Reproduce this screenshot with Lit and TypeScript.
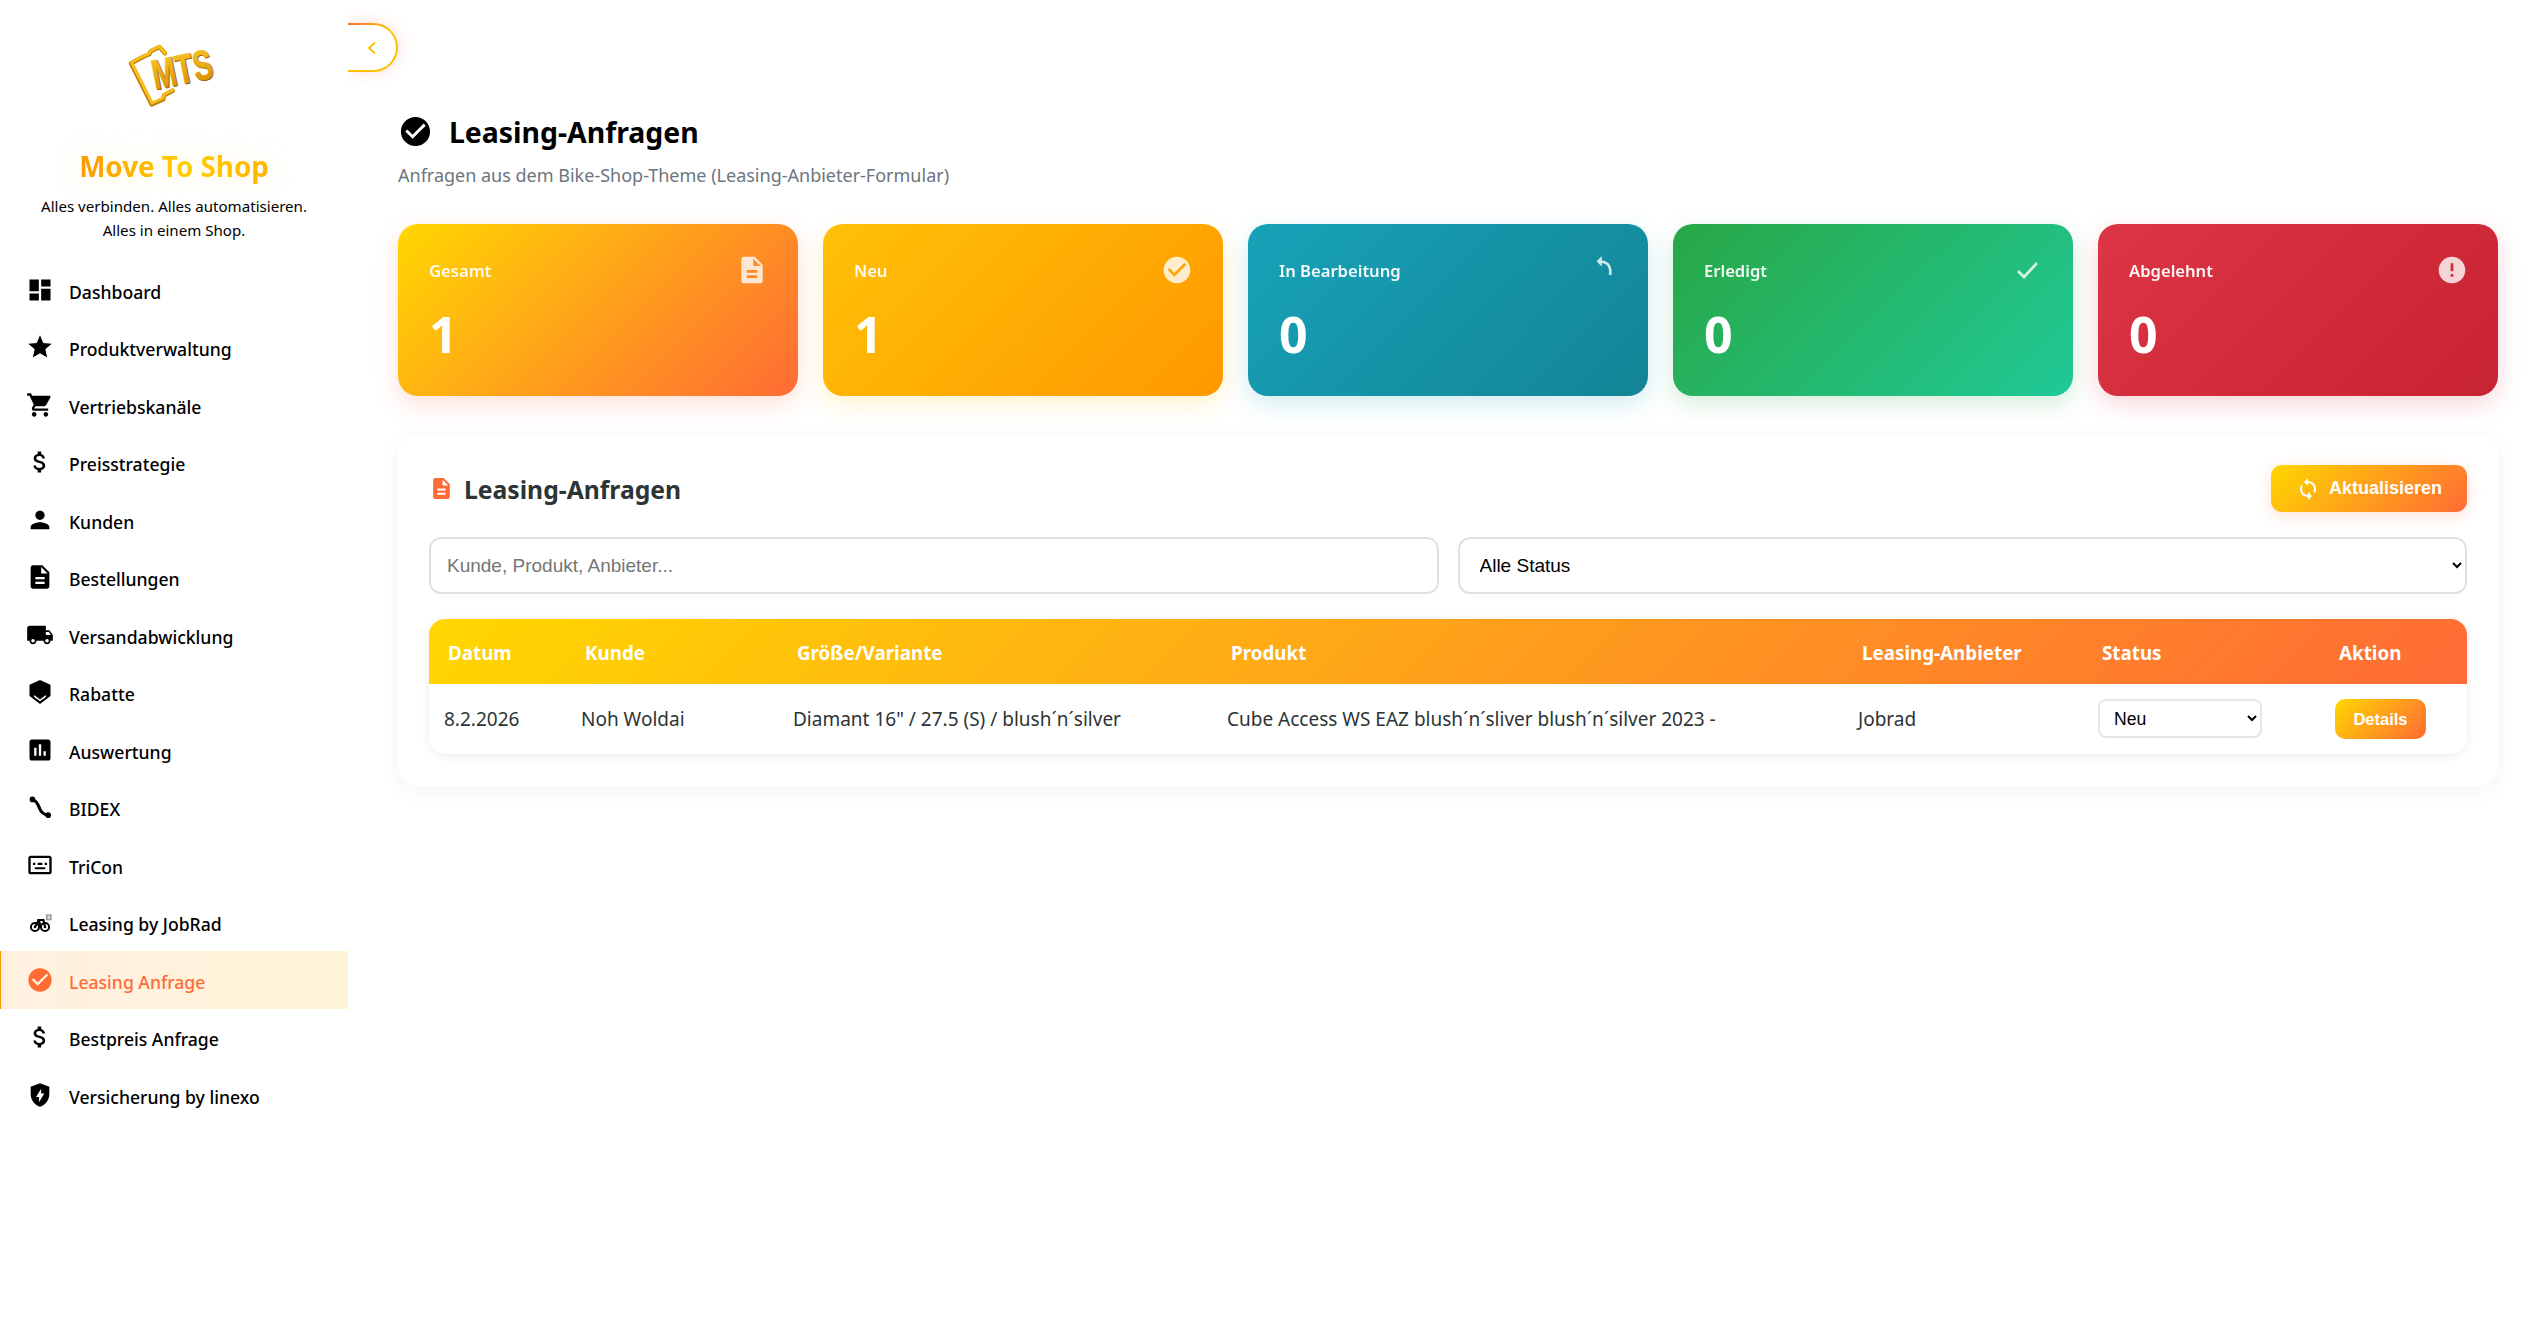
import { LitElement, html, svg, css } from 'lit';
import { customElement } from 'lit/decorators.js';

const p = (d: string) => svg`<path d=${d}></path>`;

const icons: Record<string, unknown> = {
  dashboard: p('M3 13h8V3H3v10zm0 8h8v-6H3v6zm10 0h8V11h-8v10zm0-18v6h8V3h-8z'),
  star: p('M12 17.27L18.18 21l-1.64-7.03L22 9.24l-7.19-.61L12 2 9.19 8.63 2 9.24l5.46 4.73L5.82 21z'),
  cart: p('M7 18c-1.1 0-1.99.9-1.99 2S5.9 22 7 22s2-.9 2-2-.9-2-2-2zM1 2v2h2l3.6 7.59-1.35 2.45c-.16.28-.25.61-.25.96 0 1.1.9 2 2 2h12v-2H7.42c-.14 0-.25-.11-.25-.25l.03-.12.9-1.63h7.45c.75 0 1.41-.41 1.75-1.03l3.58-6.49c.08-.14.12-.31.12-.48 0-.55-.45-1-1-1H5.21l-.94-2H1zm16 16c-1.1 0-1.99.9-1.99 2s.89 2 1.99 2 2-.9 2-2-.9-2-2-2z'),
  money: p('M11.8 10.9c-2.27-.59-3-1.2-3-2.15 0-1.09 1.01-1.85 2.7-1.85 1.78 0 2.44.85 2.5 2.1h2.21c-.07-1.72-1.12-3.3-3.21-3.81V3h-3v2.16c-1.94.42-3.5 1.68-3.5 3.61 0 2.31 1.91 3.46 4.7 4.13 2.5.6 3 1.48 3 2.41 0 .69-.49 1.79-2.7 1.79-2.06 0-2.87-.92-2.98-2.1h-2.2c.12 2.19 1.76 3.42 3.68 3.83V21h3v-2.15c1.95-.37 3.5-1.5 3.5-3.55 0-2.84-2.43-3.81-4.7-4.4z'),
  person: p('M12 12c2.21 0 4-1.79 4-4s-1.79-4-4-4-4 1.79-4 4 1.79 4 4 4zm0 2c-2.67 0-8 1.34-8 4v2h16v-2c0-2.66-5.33-4-8-4z'),
  doc: p('M14 2H6c-1.1 0-1.99.9-1.99 2L4 20c0 1.1.89 2 1.99 2H18c1.1 0 2-.9 2-2V8l-6-6zm2 16H8v-2h8v2zm0-4H8v-2h8v2zm-3-5V3.5L18.5 9H13z'),
  truck: p('M20 8h-3V4H3c-1.1 0-2 .9-2 2v11h2c0 1.66 1.34 3 3 3s3-1.34 3-3h6c0 1.66 1.34 3 3 3s3-1.34 3-3h2v-5l-3-4zM6 18.5c-.83 0-1.5-.67-1.5-1.5s.67-1.5 1.5-1.5 1.5.67 1.5 1.5-.67 1.5-1.5 1.5zm13.5-9l1.96 2.5H17V9.5h2.5zm-1.5 9c-.83 0-1.5-.67-1.5-1.5s.67-1.5 1.5-1.5 1.5.67 1.5 1.5-.67 1.5-1.5 1.5z'),
  tag: svg`<path fill-rule="evenodd" d="M12 1.7L21 5.8v9.7l-9 6.8-9-6.8V5.8zM7 14.6l5 3.8 5-3.8v1.7L12 20l-5-3.7z"></path>`,
  chart: p('M19 3H5c-1.1 0-2 .9-2 2v14c0 1.1.9 2 2 2h14c1.1 0 2-.9 2-2V5c0-1.1-.9-2-2-2zM9 17H7v-7h2v7zm4 0h-2V7h2v10zm4 0h-2v-4h2v4z'),
  link: svg`<circle cx="5.5" cy="5.5" r="2.4"></circle><circle cx="19" cy="19" r="2.4"></circle><path d="M5.5 5.5c4.5 1.5 5.5 6.5 6.5 8.5s3 4.5 7 5" fill="none" stroke="currentColor" stroke-width="2.6"></path>`,
  tricon: p('M20 4H4c-1.1 0-2 .9-2 2v12c0 1.1.9 2 2 2h16c1.1 0 2-.9 2-2V6c0-1.1-.9-2-2-2zm0 14H4V6h16v12zM6 10h2v2H6zm4 0h4v2h-4zm6 0h2v2h-2zM7.5 14h9v1.7h-9z'),
  bike: svg`<rect x="17.1" y="5.4" width="4.9" height="5.2" fill="#9a9a9a"></rect><rect x="18.5" y="6.6" width="2.1" height="2.8" fill="#dcdcdc"></rect>
    <g fill="none" stroke="currentColor"><circle cx="7.7" cy="16.3" r="3.5" stroke-width="1.7"></circle><circle cx="16.3" cy="16.3" r="3.5" stroke-width="1.7"></circle>
    <path d="M7.7 16.3l3.3-6h4l1.3 6M11 10.3l1.6 6M9.6 10.3H12" stroke-width="1.8"></path></g><circle cx="7.7" cy="16.3" r="1.1"></circle><circle cx="16.3" cy="16.3" r="1.1"></circle>`,
  check: p('M12 2C6.48 2 2 6.48 2 12s4.48 10 10 10 10-4.48 10-10S17.52 2 12 2zm-2 15l-5-5 1.41-1.41L10 14.17l7.59-7.59L19 8l-9 9z'),
  shield: svg`<path fill-rule="evenodd" d="M12 2L4 5v6.1c0 5 3.4 9.7 8 10.9 4.6-1.2 8-5.9 8-10.9V5zm1 4.6l-4.4 7.2h2.6v4.4l4.4-7.4H13z"></path>`,
  undo: svg`<path d="M8 5.4l3.8-3.9v8z"></path><path d="M10.5 5.5h.5c4.2.3 7 3 7.2 6.6v3.6" fill="none" stroke="currentColor" stroke-width="2"></path>`,
  done: svg`<path d="M5.25 12.75l4.5 4.5 9.75-10.5" fill="none" stroke="currentColor" stroke-width="2"></path>`,
  error: p('M12 2C6.48 2 2 6.48 2 12s4.48 10 10 10 10-4.48 10-10S17.52 2 12 2zm1 15h-2v-2h2v2zm0-4h-2V7h2v6z'),
  sync: p('M12 4V1L8 5l4 4V6c3.31 0 6 2.69 6 6 0 1.01-.25 1.97-.7 2.8l1.46 1.46C19.54 15.03 20 13.57 20 12c0-4.42-3.58-8-8-8zm0 14c-3.31 0-6-2.69-6-6 0-1.01.25-1.97.7-2.8L5.24 7.74C4.46 8.97 4 10.43 4 12c0 4.42 3.58 8 8 8v3l4-4-4-4v3z'),
};

const icon = (name: string) => html`<svg class="ico" viewBox="0 0 24 24" fill="currentColor">${icons[name]}</svg>`;

const nav = [
  ['dashboard', 'Dashboard'],
  ['star', 'Produktverwaltung'],
  ['cart', 'Vertriebskanäle'],
  ['money', 'Preisstrategie'],
  ['person', 'Kunden'],
  ['doc', 'Bestellungen'],
  ['truck', 'Versandabwicklung'],
  ['tag', 'Rabatte'],
  ['chart', 'Auswertung'],
  ['link', 'BIDEX'],
  ['tricon', 'TriCon'],
  ['bike', 'Leasing by JobRad'],
  ['check', 'Leasing Anfrage'],
  ['money', 'Bestpreis Anfrage'],
  ['shield', 'Versicherung by linexo'],
];

const stats = [
  ['c-total', 'Gesamt', '1', 'doc'],
  ['c-new', 'Neu', '1', 'check'],
  ['c-work', 'In Bearbeitung', '0', 'undo'],
  ['c-done', 'Erledigt', '0', 'done'],
  ['c-rej', 'Abgelehnt', '0', 'error'],
];

@customElement('app-root')
export class AppRoot extends LitElement {
  static styles = css`
    :host {
      display: block;
      min-height: 1329px;
      background: #fff;
      color: #000;
      font-family: "Noto Sans", "Open Sans", sans-serif;
      position: relative;
    }
    * { box-sizing: border-box; }
    .layout { display: flex; align-items: stretch; min-height: 1329px; }

    .sidebar {
      width: 348px;
      flex: none;
      background: #fff;
      position: relative;
      z-index: 2;
    }
    .brand-head {
      height: 261px;
      padding-top: 45px;
      text-align: center;
    }
    .logo { display: block; width: 88px; height: 62px; margin-left: 129px; overflow: visible; }
    .brand {
      margin-top: 39px;
      display: inline-block;
      font-size: 27.8px;
      line-height: 40px;
      font-weight: 700;
      background: linear-gradient(90deg, #ff9800 0%, #ffcf00 55%, #ffb300 100%);
      -webkit-background-clip: text;
      background-clip: text;
      color: transparent;
      filter: drop-shadow(0 0 14px rgba(255, 193, 7, 0.18));
    }
    .tagline { font-size: 15.1px; line-height: 24px; margin-top: 8px; }

    .item {
      height: 57.5px;
      display: flex;
      align-items: center;
      padding-left: 26px;
      font-size: 17.6px;
      font-weight: 500;
      border-left: 1px solid transparent;
    }
    .item .ico { width: 28px; height: 28px; margin-left: -1px; flex: none; }
    .item span { margin-left: 15px; margin-top: 4px; }
    .item.active {
      background: linear-gradient(90deg, #fff0e0, #fff4d9);
      border-left-color: #ff9800;
      color: #ff6b35;
    }

    .toggle {
      position: absolute;
      left: 348px;
      top: 23px;
      width: 50px;
      height: 49px;
      border: 2.5px solid transparent;
      border-left: 0;
      border-radius: 0 25px 25px 0;
      background: linear-gradient(#fff, #fff) padding-box,
        linear-gradient(135deg, #ff6b35 0%, #ffc107 45%, #ffc107 100%) border-box;
      box-shadow: 0 0 15px rgba(255, 107, 53, 0.22);
      color: #ffc107;
      display: flex;
      align-items: center;
      justify-content: center;
      padding: 0 2px 0 0;
      z-index: 1;
    }
    .toggle svg { width: 14px; height: 14px; margin-left: 2px; }

    .main { flex: 1; min-width: 0; padding: 112px 47px 0 50px; }
    .page-title {
      display: flex;
      align-items: center;
      height: 40px;
      font-size: 28.4px;
      font-weight: 700;
    }
    .page-title .ico { width: 35px; height: 35px; margin: -2px 16px 0 0; }
    .subtitle { margin-top: 10px; line-height: 26px; font-size: 18px; color: #6c757d; }

    .stats { display: grid; grid-template-columns: repeat(5, 400px); column-gap: 25px; margin-top: 36px; }
    .stat {
      height: 172px;
      border-radius: 20px;
      padding: 30px 30px 0 31px;
      color: #fff;
    }
    .stat-head { display: flex; align-items: center; justify-content: space-between; height: 32px; }
    .stat-label { font-size: 16.6px; font-weight: 600; opacity: 0.95; }
    .stat-head .ico { width: 32px; height: 32px; opacity: 0.8; }
    .stat-num { margin-top: 18px; font-size: 50px; line-height: 60px; font-weight: 700; }
    .c-total { background: linear-gradient(135deg, #ffd700, #ff6b35); box-shadow: 0 8px 25px rgba(255, 107, 53, 0.2); }
    .c-new { background: linear-gradient(135deg, #ffc107, #ff9800); box-shadow: 0 8px 25px rgba(255, 193, 7, 0.2); }
    .c-work { background: linear-gradient(135deg, #17a2b8, #138496); box-shadow: 0 8px 25px rgba(23, 162, 184, 0.2); }
    .c-done { background: linear-gradient(135deg, #28a745, #20c997); box-shadow: 0 8px 25px rgba(40, 167, 69, 0.2); }
    .c-rej { background: linear-gradient(135deg, #dc3545, #c82333); box-shadow: 0 8px 25px rgba(220, 53, 69, 0.2); }

    .panel {
      margin-top: 39px;
      height: 351px;
      border-radius: 20px;
      background: #fff;
      box-shadow: 0 4px 20px rgba(0, 0, 0, 0.05);
      padding: 30px 31px 0;
    }
    .panel-head { display: flex; align-items: center; justify-content: space-between; height: 47px; }
    .panel-title {
      display: flex;
      align-items: center;
      padding-top: 1px;
      font-size: 24.7px;
      font-weight: 700;
      color: #2d3436;
    }
    .panel-title .ico { width: 25px; height: 25px; margin: -1px 10px 0 0; color: #ff6b35; flex: none; }
    .refresh {
      width: 196px;
      height: 47px;
      border: 0;
      padding: 0;
      border-radius: 11px;
      background: linear-gradient(135deg, #ffd700, #ff6b35);
      box-shadow: 0 4px 15px rgba(255, 107, 53, 0.2);
      color: #fff;
      font-family: "Liberation Sans", Arial, sans-serif;
      font-size: 18px;
      font-weight: 700;
      display: flex;
      align-items: center;
      justify-content: center;
      gap: 9px;
    }
    .refresh .ico { width: 24px; height: 24px; }

    .filters { display: grid; grid-template-columns: 1fr 1fr; column-gap: 19px; margin-top: 25px; }
    .filters input, .filters select {
      height: 57px;
      width: 100%;
      border: 2.5px solid #dee2e6;
      border-radius: 12px;
      background: #fff;
      font-family: "Liberation Sans", Arial, sans-serif;
      font-size: 19px;
      color: #000;
      padding: 0 16px;
      outline: none;
    }
    .filters input::placeholder { color: #757575; }

    .table-wrap {
      margin-top: 25px;
      border-radius: 16px;
      overflow: hidden;
      box-shadow: 0 2px 10px rgba(0, 0, 0, 0.08);
    }
    table { width: 100%; table-layout: fixed; border-collapse: collapse; font-size: 19px; color: #2d3436; }
    thead tr { background: linear-gradient(135deg, #ffd700, #ff6b35); }
    th {
      height: 65px;
      padding: 2px 19px 0;
      text-align: left;
      color: #fff;
      font-size: 18.8px;
      font-weight: 700;
    }
    td { height: 70px; padding: 0 15px; white-space: nowrap; }
    .w1 { width: 137px; }
    .w2 { width: 212px; }
    .w3 { width: 434px; }
    .w4 { width: 631px; }
    .w5 { width: 240px; }
    .w6 { width: 237px; }
    .w7 { width: 147px; }
    .row-select {
      display: block;
      width: 164px;
      height: 39px;
      margin-top: -1px;
      border: 2px solid #e3e6ea;
      border-radius: 8px;
      background: #fff;
      font-family: "Liberation Sans", Arial, sans-serif;
      font-size: 17.6px;
      color: #000;
      padding: 0 10px;
    }
    .details {
      display: block;
      width: 91px;
      height: 40px;
      border: 0;
      padding: 0;
      border-radius: 10px;
      background: linear-gradient(135deg, #ffd700, #ff6b35);
      color: #fff;
      font-family: "Liberation Sans", Arial, sans-serif;
      font-size: 16.5px;
      font-weight: 700;
    }
  `;

  private renderLogo() {
    return html`<svg class="logo" viewBox="0 0 88 62">
      <defs>
        <linearGradient id="gold" x1="0" y1="0" x2="0" y2="1">
          <stop offset="0" stop-color="#ffc928"></stop>
          <stop offset="1" stop-color="#d48c00"></stop>
        </linearGradient>
      </defs>
      <path d="M36 8.3L30.3 2 21.5 6.5 20.3 9.3 14.3 11.7 2 18.3 22.7 59.5 34.3 54.3 35 50.3 43.7 45.7"
        fill="none" stroke="#c07f08" stroke-width="4.4" stroke-linejoin="round" stroke-linecap="round"></path>
      <path d="M36 8.3L30.3 1.4 21.5 5.8 20.3 8.6 14.3 11 2.4 17.4 23 58 34 53 35 49.4 43.7 44.8"
        fill="none" stroke="#f9bd1c" stroke-width="3" stroke-linejoin="round" stroke-linecap="round"></path>
      <g transform="translate(26 44.5) rotate(-11.5)" font-family="Liberation Sans, Arial, sans-serif" font-weight="700" font-size="42">
        <text x="0.8" y="1" textLength="61" lengthAdjust="spacingAndGlyphs" fill="#7a4e02" stroke="#7a4e02" stroke-width="0.6">MTS</text>
        <text x="0" y="0" textLength="61" lengthAdjust="spacingAndGlyphs" fill="url(#gold)" stroke="url(#gold)" stroke-width="0.6">MTS</text>
      </g>
    </svg>`;
  }

  render() {
    return html`
      <div class="layout">
        <aside class="sidebar">
          <div class="brand-head">
            ${this.renderLogo()}
            <div class="brand">Move To Shop</div>
            <div class="tagline">Alles verbinden. Alles automatisieren.<br />Alles in einem Shop.</div>
          </div>
          ${nav.map(
            ([ic, label]) => html`<div class="item ${label === 'Leasing Anfrage' ? 'active' : ''}">
              ${icon(ic)}<span>${label}</span>
            </div>`
          )}
        </aside>
        <button class="toggle">
          <svg viewBox="0 0 14 14" fill="none" stroke="currentColor" stroke-width="2"><path d="M10 1.5L4 7l6 5.5"></path></svg>
        </button>
        <main class="main">
          <div class="page-title">${icon('check')}Leasing-Anfragen</div>
          <div class="subtitle">Anfragen aus dem Bike-Shop-Theme (Leasing-Anbieter-Formular)</div>
          <div class="stats">
            ${stats.map(
              ([cls, label, num, ic]) => html`<div class="stat ${cls}">
                <div class="stat-head"><span class="stat-label">${label}</span>${icon(ic)}</div>
                <div class="stat-num">${num}</div>
              </div>`
            )}
          </div>
          <section class="panel">
            <div class="panel-head">
              <div class="panel-title">${icon('doc')}Leasing-Anfragen</div>
              <button class="refresh">${icon('sync')}Aktualisieren</button>
            </div>
            <div class="filters">
              <input placeholder="Kunde, Produkt, Anbieter..." />
              <select><option>Alle Status</option></select>
            </div>
            <div class="table-wrap">
              <table>
                <colgroup>
                  <col class="w1" /><col class="w2" /><col class="w3" /><col class="w4" /><col class="w5" /><col class="w6" /><col class="w7" />
                </colgroup>
                <thead>
                  <tr>
                    <th>Datum</th><th>Kunde</th><th>Größe/Variante</th><th>Produkt</th><th>Leasing-Anbieter</th><th>Status</th><th>Aktion</th>
                  </tr>
                </thead>
                <tbody>
                  <tr>
                    <td>8.2.2026</td>
                    <td>Noh Woldai</td>
                    <td>Diamant 16" / 27.5 (S) / blush´n´silver</td>
                    <td>Cube Access WS EAZ blush´n´sliver blush´n´silver 2023 -</td>
                    <td>Jobrad</td>
                    <td><select class="row-select"><option>Neu</option></select></td>
                    <td><button class="details">Details</button></td>
                  </tr>
                </tbody>
              </table>
            </div>
          </section>
        </main>
      </div>
    `;
  }
}
